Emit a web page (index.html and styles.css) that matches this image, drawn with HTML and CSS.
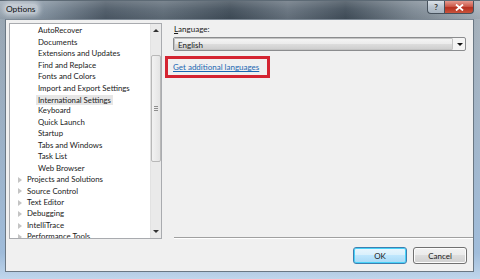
FILE: index.html
```html
<!DOCTYPE html>
<html>
<head>
<meta charset="utf-8">
<link rel="stylesheet" href="styles.css">
</head>
<body>
<div class="window">
  <div class="titlebar">
    <span class="title">Options</span>
    <div class="caption-btns">
      <div class="cbtn help">?</div>
      <div class="cbtn close">
        <svg width="9" height="7" viewBox="0 0 9 7"><path d="M1 0.5 L8 6.5 M8 0.5 L1 6.5" stroke="#fff" stroke-width="1.8"/></svg>
      </div>
    </div>
  </div>
  <div class="frame">
    <div class="client">
      <div class="top">
        <div class="tree">
          <ul class="items">
            <li class="child">AutoRecover</li>
            <li class="child">Documents</li>
            <li class="child">Extensions and Updates</li>
            <li class="child">Find and Replace</li>
            <li class="child">Fonts and Colors</li>
            <li class="child">Import and Export Settings</li>
            <li class="child"><span class="sel">International Settings</span></li>
            <li class="child">Keyboard</li>
            <li class="child">Quick Launch</li>
            <li class="child">Startup</li>
            <li class="child">Tabs and Windows</li>
            <li class="child">Task List</li>
            <li class="child">Web Browser</li>
            <li class="node"><span class="tri"></span>Projects and Solutions</li>
            <li class="node"><span class="tri"></span>Source Control</li>
            <li class="node"><span class="tri"></span>Text Editor</li>
            <li class="node"><span class="tri"></span>Debugging</li>
            <li class="node"><span class="tri"></span>IntelliTrace</li>
            <li class="node"><span class="tri"></span>Performance Tools</li>
          </ul>
          <div class="scrollbar">
            <div class="sarrow up"></div>
            <div class="track">
              <div class="thumb"><span class="grip"></span></div>
            </div>
            <div class="sarrow down"></div>
          </div>
        </div>
        <div class="panel">
          <div class="label"><u>L</u>anguage:</div>
          <div class="combo">
            <div class="combo-text">English</div>
            <div class="combo-btn"><span class="darr"></span></div>
          </div>
          <div class="highlight"><a class="link" href="#">Get additional languages</a></div>
          <div class="spacer"></div>
          <div class="sep"></div>
        </div>
      </div>
      <div class="footer">
        <button class="btn ok">OK</button>
        <button class="btn">Cancel</button>
      </div>
    </div>
  </div>
</div>
</body>
</html>
```

FILE: styles.css
```css
* { box-sizing: border-box; }
html, body { margin: 0; padding: 0; }
body {
  width: 480px;
  height: 279px;
  overflow: hidden;
  font-family: "Lato", "Open Sans", sans-serif;
  font-size: 8px;
  color: #1a1a1a;
  background: #5a6670;
}
.window {
  width: 480px;
  height: 279px;
  display: flex;
  flex-direction: column;
  background: linear-gradient(90deg, #9aa7b3 0%, #8796a4 8%, #4c5966 22%, #5f6c78 34%, #3f4c58 48%, #66727e 60%, #414e5a 72%, #7d8994 86%, #a7b2bc 100%);
}
.titlebar {
  height: 19px;
  display: flex;
  align-items: flex-start;
  background: linear-gradient(180deg, rgba(255,255,255,0.18) 0%, rgba(255,255,255,0.05) 45%, rgba(0,0,0,0.05) 100%);
  border-top: 1px solid #5d6a75;
}
.title {
  margin-left: 5px;
  margin-top: 3px;
  padding: 0 3px 0 1px;
  font-size: 8.4px;
  color: #111;
  background: rgba(225, 230, 235, 0.55);
  border-radius: 4px;
  box-shadow: 0 0 4px 2px rgba(225, 230, 235, 0.55);
}
.caption-btns {
  margin-left: auto;
  margin-right: 6px;
  display: flex;
  height: 13px;
}
.cbtn {
  height: 13px;
  display: flex;
  align-items: center;
  justify-content: center;
  border: 1px solid #46515c;
  border-top: none;
}
.help {
  width: 17px;
  border-radius: 0 0 0 4px;
  background: linear-gradient(180deg, #dbe2e9 0%, #b9c4cf 50%, #a7b3bf 100%);
  color: #333;
  font-size: 8px;
  font-weight: bold;
  border-right: none;
}
.close {
  width: 30px;
  border-radius: 0 0 4px 0;
  background: linear-gradient(180deg, #e69a8f 0%, #cc5a4b 45%, #b52f1f 55%, #c9543c 100%);
}
.frame {
  flex: 1;
  display: flex;
  padding: 0 6px 7px 5px;
  background: linear-gradient(180deg, rgba(150,168,186,0) 0%, rgba(160,190,222,0.9) 90%, #c0d6ec 100%);
}
.client {
  flex: 1;
  display: flex;
  flex-direction: column;
  background: #f0f0f0;
  border: 1px solid #6a7783;
  border-top-color: #7d8995;
}
.top {
  flex: 1;
  display: flex;
  padding: 3px 0 0 3px;
}
.tree {
  width: 153px;
  height: 216px;
  border: 1px solid #a9abaf;
  background: #fff;
  display: flex;
  overflow: hidden;
}
.items {
  list-style: none;
  margin: 0;
  padding: 1.4px 0 0 0;
  flex: 1;
  overflow: hidden;
  font-size: 7.8px;
}
.items li {
  height: 11.45px;
  line-height: 11.45px;
  white-space: nowrap;
  display: flex;
  align-items: center;
}
.child { padding-left: 28px; }
.node { padding-left: 8px; }
.sel {
  background: #e6e6e6;
  padding: 0 2px;
  margin-left: -2px;
  line-height: 10px;
}
.tri {
  width: 0;
  height: 0;
  border-left: 4px solid #c4c4c4;
  border-top: 3px solid transparent;
  border-bottom: 3px solid transparent;
  margin-right: 5px;
}
.scrollbar {
  width: 11px;
  display: flex;
  flex-direction: column;
  background: #eaeaea;
  border-left: 1px solid #e2e2e2;
}
.sarrow {
  height: 13px;
  display: flex;
  align-items: center;
  justify-content: center;
}
.sarrow.up::before {
  content: "";
  border-bottom: 3px solid #333;
  border-left: 3px solid transparent;
  border-right: 3px solid transparent;
}
.sarrow.down::before {
  content: "";
  border-top: 3px solid #333;
  border-left: 3px solid transparent;
  border-right: 3px solid transparent;
}
.track {
  flex: 1;
  padding-top: 18px;
  padding-bottom: 63px;
  display: flex;
}
.thumb {
  flex: 1;
  border: 1px solid #b8b8b8;
  border-radius: 2px;
  background: linear-gradient(90deg, #f2f2f2 0%, #e4e4e4 100%);
  display: flex;
  align-items: center;
  justify-content: center;
}
.grip {
  width: 4px;
  height: 5px;
  border-top: 1px solid #8e8e8e;
  border-bottom: 1px solid #8e8e8e;
  display: flex;
  align-items: center;
}
.grip::after {
  content: "";
  flex: 1;
  border-top: 1px solid #8e8e8e;
}
.panel {
  flex: 1;
  display: flex;
  flex-direction: column;
  padding: 1px 0 0 11px;
}
.label {
  line-height: 10px;
  margin-left: 1px;
}
.combo {
  margin-top: 3px;
  width: 293px;
  height: 14px;
  border: 1px solid #8b8c8e;
  border-radius: 2px;
  display: flex;
  background: #f4f4f4;
}
.combo-text {
  flex: 1;
  padding-left: 3px;
  line-height: 12px;
  border: 1px solid #c3c3c3;
  border-radius: 1px;
  background: linear-gradient(180deg, #f4f4f4 0%, #ebebeb 50%, #dddddd 51%, #cfcfcf 100%);
  margin-right: 1px;
}
.combo-btn {
  width: 11px;
  display: flex;
  align-items: center;
  justify-content: center;
}
.darr {
  border-top: 3px solid #111;
  border-left: 3px solid transparent;
  border-right: 3px solid transparent;
}
.highlight {
  align-self: flex-start;
  margin-top: 5px;
  margin-left: -8px;
  border: 3px solid #d42431;
  padding: 0 8px 0 5px;
  height: 22px;
  display: flex;
  align-items: center;
}
.link {
  color: #1b67b2;
  text-decoration: underline;
}
.spacer { flex: 1; }
.sep {
  height: 2px;
  margin-left: 1px;
  border-top: 1px solid #a0a0a0;
  border-bottom: 1px solid #ffffff;
}
.footer {
  height: 32px;
  display: flex;
  justify-content: flex-end;
  align-items: flex-start;
  gap: 6px;
  padding: 8px 6px 0 0;
}
.btn {
  width: 54px;
  height: 17px;
  font-family: "Lato", "Open Sans", sans-serif;
  font-size: 8px;
  color: #1a1a1a;
  border: 1px solid #707070;
  border-radius: 3px;
  background: linear-gradient(180deg, #f2f2f2 0%, #ebebeb 45%, #dddddd 50%, #cfcfcf 100%);
  box-shadow: inset 0 0 0 1px #fcfcfc;
  padding: 0;
}
.btn.ok {
  border-color: #3c7fb1;
  background: linear-gradient(180deg, #eaf6fd 0%, #d9f0fc 45%, #bee6fd 50%, #a7d9f5 100%);
  box-shadow: inset 0 0 0 1px #48d2f8;
}
```
